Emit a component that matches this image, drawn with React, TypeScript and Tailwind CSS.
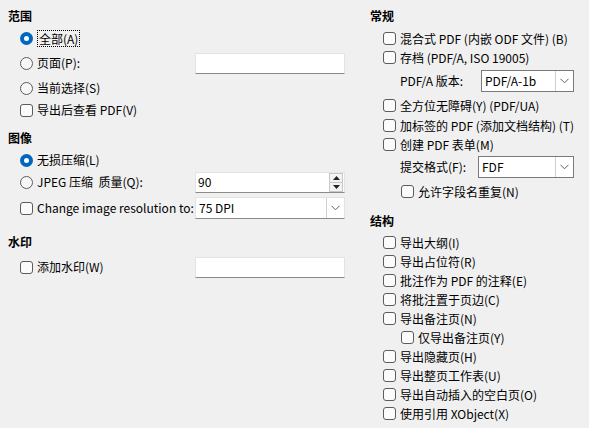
import React from 'react';

const font = { fontFamily: '"Noto Sans CJK SC", "Noto Sans", sans-serif' };

function Radio({ checked }: { checked?: boolean }) {
  return checked ? (
    <span className="flex h-[13px] w-[13px] shrink-0 items-center justify-center rounded-full bg-[#0067c0]">
      <span className="h-[5px] w-[5px] rounded-full bg-white" />
    </span>
  ) : (
    <span className="h-[13px] w-[13px] shrink-0 rounded-full border border-[#5c5c5c] bg-[#f7f7f7]" />
  );
}

function Check() {
  return <span className="h-[13px] w-[13px] shrink-0 rounded-[3px] border border-[#5c5c5c] bg-[#fbfbfb]" />;
}

function Chevron() {
  return (
    <svg width="9" height="6" viewBox="0 0 9 6" fill="none">
      <path d="M0.5 0.8 L4.5 4.8 L8.5 0.8" stroke="#606060" strokeWidth="1" />
    </svg>
  );
}

function Field({ value, w = 150 }: { value?: string; w?: number }) {
  return (
    <div
      className="flex h-[21px] items-center border border-[#e3e3e3] border-b-[#8a8a8a] bg-white pl-[2px] text-[12px]"
      style={{ width: w }}
    >
      {value}
    </div>
  );
}

function Spin({ value }: { value: string }) {
  return (
    <div className="flex h-[21px] w-[150px] items-center border border-[#e3e3e3] border-b-[#8a8a8a] bg-white text-[12px]">
      <span className="flex-1 pl-[2px]">{value}</span>
      <div className="mr-[1px] flex h-[19px] w-[14px] flex-col border border-[#c8c8c8] bg-[#f3f3f3]">
        <div className="flex flex-1 items-center justify-center border-b border-[#c8c8c8]">
          <svg width="7" height="4" viewBox="0 0 7 4">
            <path d="M3.5 0 L7 4 L0 4 Z" fill="#222" />
          </svg>
        </div>
        <div className="flex flex-1 items-center justify-center">
          <svg width="7" height="4" viewBox="0 0 7 4">
            <path d="M0 0 L7 0 L3.5 4 Z" fill="#222" />
          </svg>
        </div>
      </div>
    </div>
  );
}

function Combo({ value, w, dark }: { value: string; w: number; dark?: boolean }) {
  return (
    <div
      className={`flex h-[22px] items-center bg-white text-[12px] ${
        dark ? 'border border-[#7a7a7a]' : 'border border-[#e3e3e3] border-b-[#8a8a8a]'
      }`}
      style={{ width: w }}
    >
      <span className="flex-1 pl-[3px]">{value}</span>
      <div className="flex h-[20px] w-[18px] items-center justify-center border-l border-[#cfcfcf] bg-white">
        <Chevron />
      </div>
    </div>
  );
}

function Heading({ children, className = '' }: { children: React.ReactNode; className?: string }) {
  return <div className={`flex h-[20px] items-center text-[12px] font-bold ${className}`}>{children}</div>;
}

function CheckRow({ label, indent = 0, className = '' }: { label: string; indent?: number; className?: string }) {
  return (
    <div className={`flex h-[19px] items-center gap-[4px] text-[12px] ${className}`} style={{ paddingLeft: indent }}>
      <Check />
      <span>{label}</span>
    </div>
  );
}

export default function App() {
  return (
    <div className="flex h-[428px] w-[589px] overflow-hidden bg-[#f0f0f0] text-black" style={font}>
      {/* left column */}
      <div className="flex w-[362px] flex-col pl-[8px] pt-[6px]">
        <Heading>范围</Heading>
        <div className="flex h-[24px] items-center gap-[4px] pl-[12px] text-[12px]">
          <Radio checked />
          <span className="border border-dotted border-black px-[1px] leading-[15px]">全部(A)</span>
        </div>
        <div className="flex h-[26px] items-center pl-[12px] text-[12px]">
          <div className="flex w-[175px] items-center gap-[4px]">
            <Radio />
            <span>页面(P):</span>
          </div>
          <Field />
        </div>
        <div className="flex h-[24px] items-center gap-[4px] pl-[12px] text-[12px]">
          <Radio />
          <span>当前选择(S)</span>
        </div>
        <CheckRow label="导出后查看 PDF(V)" indent={12} className="h-[20px]" />

        <Heading className="mt-[8px]">图像</Heading>
        <div className="flex h-[24px] items-center gap-[4px] pl-[12px] text-[12px]">
          <Radio checked />
          <span>无损压缩(L)</span>
        </div>
        <div className="flex h-[20px] items-center pl-[12px] text-[12px]">
          <div className="flex w-[175px] items-center gap-[4px]">
            <Radio />
            <span className="whitespace-pre">JPEG 压缩  质量(Q):</span>
          </div>
          <Spin value="90" />
        </div>
        <div className="flex h-[32px] items-center pl-[12px] text-[12px]">
          <div className="flex w-[175px] items-center gap-[4px]">
            <Check />
            <span>Change image resolution to:</span>
          </div>
          <Combo value="75 DPI" w={150} />
        </div>

        <Heading className="mt-[8px]">水印</Heading>
        <div className="flex h-[30px] items-center pl-[12px] text-[12px]">
          <div className="flex w-[175px] items-center gap-[4px]">
            <Check />
            <span>添加水印(W)</span>
          </div>
          <Field />
        </div>
      </div>

      {/* right column */}
      <div className="flex flex-1 flex-col pl-[8px] pt-[6px]">
        <Heading>常规</Heading>
        <CheckRow label="混合式 PDF (内嵌 ODF 文件) (B)" indent={13} className="mt-[3px]" />
        <CheckRow label="存档 (PDF/A, ISO 19005)" indent={13} />
        <div className="mt-[3px] flex h-[22px] items-center text-[12px]">
          <span className="w-[111px] pl-[30px]">PDF/A 版本:</span>
          <Combo value="PDF/A-1b" w={93} dark />
        </div>
        <CheckRow label="全方位无障碍(Y) (PDF/UA)" indent={13} className="mt-[4px]" />
        <CheckRow label="加标签的 PDF (添加文档结构) (T)" indent={13} className="mt-[1px]" />
        <CheckRow label="创建 PDF 表单(M)" indent={13} />
        <div className="mt-[2px] flex h-[22px] items-center text-[12px]">
          <span className="w-[108px] pl-[30px]">提交格式(F):</span>
          <Combo value="FDF" w={96} dark />
        </div>
        <CheckRow label="允许字段名重复(N)" indent={31} className="mt-[4px]" />

        <Heading className="mt-[10px]">结构</Heading>
        <div className="mt-[2px] flex flex-col">
          <CheckRow label="导出大纲(I)" indent={13} />
          <CheckRow label="导出占位符(R)" indent={13} />
          <CheckRow label="批注作为 PDF 的注释(E)" indent={13} />
          <CheckRow label="将批注置于页边(C)" indent={13} />
          <CheckRow label="导出备注页(N)" indent={13} />
          <CheckRow label="仅导出备注页(Y)" indent={31} />
          <CheckRow label="导出隐藏页(H)" indent={13} />
          <CheckRow label="导出整页工作表(U)" indent={13} />
          <CheckRow label="导出自动插入的空白页(O)" indent={13} />
          <CheckRow label="使用引用 XObject(X)" indent={13} />
        </div>
      </div>
    </div>
  );
}
